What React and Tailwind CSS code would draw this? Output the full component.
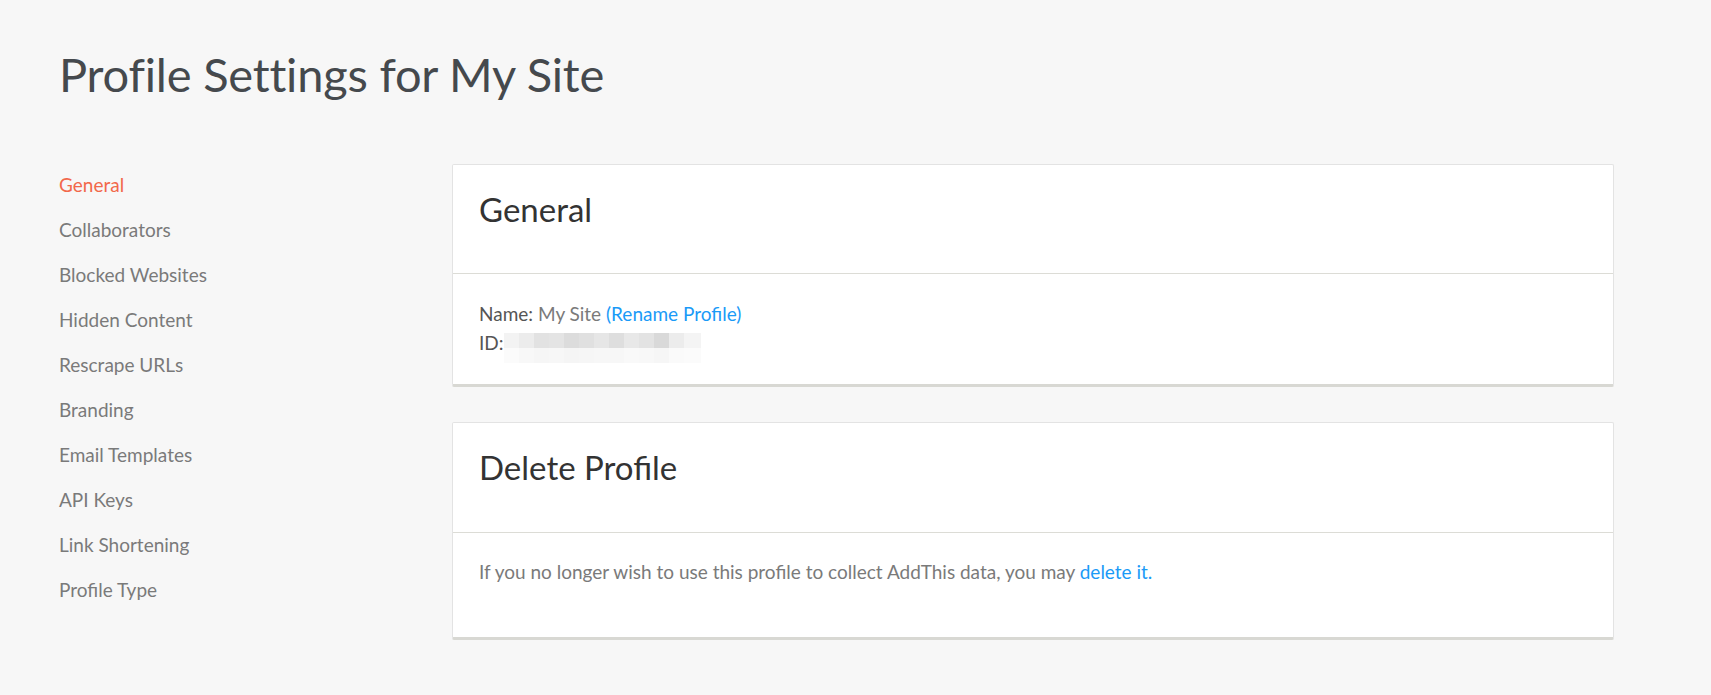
export default function App() {
  const items = [
    "General",
    "Collaborators",
    "Blocked Websites",
    "Hidden Content",
    "Rescrape URLs",
    "Branding",
    "Email Templates",
    "API Keys",
    "Link Shortening",
    "Profile Type",
  ];
  const blocks = [
    ["#f3f3f3", "#fbfbfb"],
    ["#ececec", "#f8f8f8"],
    ["#e2e2e2", "#f6f6f6"],
    ["#e4e4e4", "#f7f7f7"],
    ["#dcdcdc", "#f5f5f5"],
    ["#e0e0e0", "#f6f6f6"],
    ["#e6e6e6", "#f7f7f7"],
    ["#dedede", "#f7f7f7"],
    ["#e8e8e8", "#f9f9f9"],
    ["#e3e3e3", "#f8f8f8"],
    ["#d9d9d9", "#f6f6f6"],
    ["#ececec", "#fafafa"],
  ];
  return (
    <div
      className="min-h-[695px] w-full bg-[#f7f7f7] pl-[59px] pr-[97px] pt-[44px]"
      style={{ fontFamily: "Lato, 'Open Sans', sans-serif" }}
    >
      <h1 className="text-[47px] leading-[60px] font-normal text-[#45494d] tracking-[-0.2px]">
        Profile Settings for My Site
      </h1>
      <div className="mt-[68px] flex">
        <ul className="w-[393px] shrink-0">
          {items.map((it, i) => (
            <li
              key={it}
              className={
                "h-[45px] text-[19px] leading-[26px] " +
                (i === 0 ? "text-[#f2684b]" : "text-[#7a7a7a]")
              }
            >
              {it}
            </li>
          ))}
        </ul>
        <div className="flex-1 flex flex-col gap-[35px] -mt-[8px]">
          <section className="bg-white border border-[#e3e3e3] border-b-[3px] border-b-[#d8d8d3] rounded-[2px]">
            <div className="h-[109px] border-b border-[#dcdcd6] px-[26px] pt-[23px]">
              <h2 className="text-[33px] leading-[42px] font-normal text-[#333]">General</h2>
            </div>
            <div className="h-[110px] px-[26px] pt-[25px] text-[19px] leading-[29px]">
              <div>
                <span className="text-[#555]">Name: </span>
                <span className="text-[#7a7a7a]">My Site </span>
                <span className="text-[#1a9af7]">(Rename Profile)</span>
              </div>
              <div className="flex items-start text-[#555]">
                <span>ID:</span>
                <div className="mt-[5px] flex flex-col">
                  <div className="flex">
                    {blocks.map((b, i) => (
                      <div key={i} className="h-[15px] w-[15px]" style={{ background: b[0] }} />
                    ))}
                    <div className="h-[15px] w-[17px] bg-[#f4f4f4]" />
                  </div>
                  <div className="flex">
                    {blocks.map((b, i) => (
                      <div key={i} className="h-[15px] w-[15px]" style={{ background: b[1] }} />
                    ))}
                    <div className="h-[15px] w-[17px] bg-[#fbfbfb]" />
                  </div>
                </div>
              </div>
            </div>
          </section>
          <section className="bg-white border border-[#e3e3e3] border-b-[3px] border-b-[#d8d8d3] rounded-[2px]">
            <div className="h-[110px] border-b border-[#dcdcd6] px-[26px] pt-[23px]">
              <h2 className="text-[33px] leading-[42px] font-normal text-[#333]">Delete Profile</h2>
            </div>
            <div className="h-[104px] px-[26px] pt-[24px] text-[19px] leading-[29px] text-[#7a7a7a]">
              If you no longer wish to use this profile to collect AddThis data, you may{" "}
              <span className="text-[#1a9af7]">delete it.</span>
            </div>
          </section>
        </div>
      </div>
    </div>
  );
}
